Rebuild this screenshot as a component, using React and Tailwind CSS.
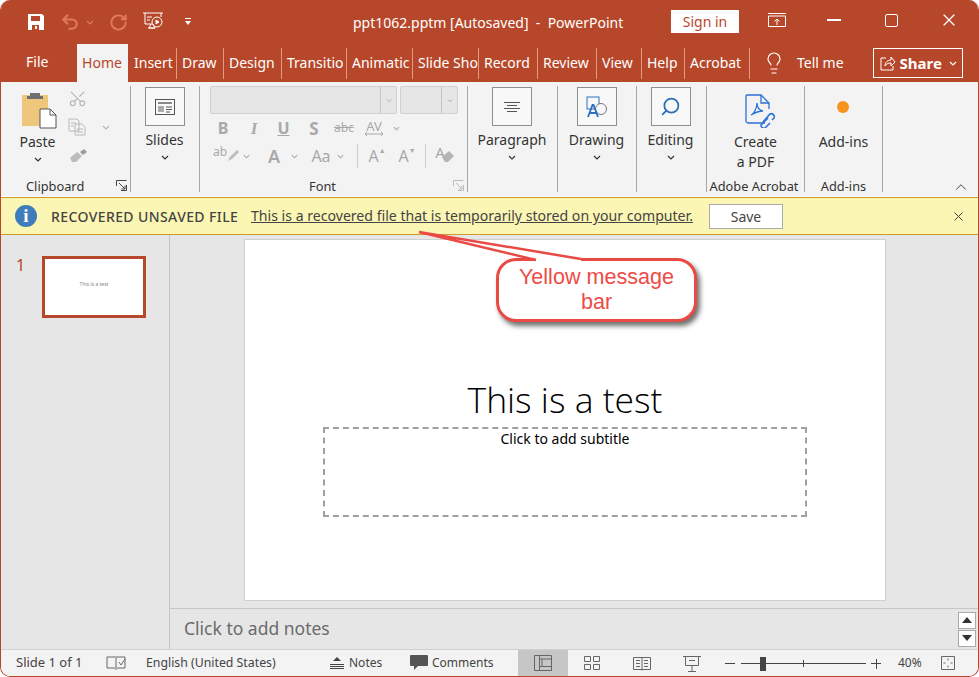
import React from 'react';
import { Undo2, RotateCw, Scissors, Lightbulb, Search, X, ChevronUp } from 'lucide-react';

const tabs = [
  ['Insert', 48],
  ['Draw', 47],
  ['Design', 58],
  ['Transitio', 65],
  ['Animatic', 66],
  ['Slide Sho', 66],
  ['Record', 59],
  ['Review', 59],
  ['View', 45],
  ['Help', 43],
  ['Acrobat', 65],
];

const Chevron = ({ className = '' }) => (
  <svg viewBox="0 0 8 5" className={`w-2 h-[5px] ${className}`} fill="none" stroke="currentColor" strokeWidth="1.2">
    <path d="M1 1l3 3 3-3" />
  </svg>
);

const Launcher = ({ className = '' }) => (
  <svg viewBox="0 0 11 11" className={`w-[11px] h-[11px] ${className}`} fill="none" stroke="currentColor">
    <path d="M.5 6V.5H10.5M10.5 5v5.5H5M3 3l6 6M9 5.5V9H5.5" />
  </svg>
);

const BigButton = ({ children, label }) => (
  <div className="flex flex-col items-center">
    <div className="w-10 h-[39px] border border-[#8f8f8f] bg-[#f8f8f8] flex items-center justify-center">{children}</div>
    <div className="mt-[4px] text-[14px] leading-[20px]">{label}</div>
    <Chevron className="mt-[5px] text-[#333]" />
  </div>
);

const Group = ({ width, label, children, launcher, labelClass = '' }) => (
  <div className="relative h-[106px] mt-[4px] border-r border-[#a6a6a6] shrink-0 flex flex-col" style={{ width }}>
    <div className="flex-1 min-h-0">{children}</div>
    {label && <div className={`text-center text-[12.8px] leading-[16px] h-[14px] text-[#333] whitespace-nowrap ${labelClass}`}>{label}</div>}
    {launcher}
  </div>
);

const FontCell = ({ w, children, className = '' }) => (
  <div className={`shrink-0 flex items-center justify-center ${className}`} style={{ width: w }}>{children}</div>
);

const Ribbon = () => (
  <div className="h-[114px] bg-[#f3f3f3] flex pl-[1px] text-[#333]">
    {/* Clipboard */}
    <Group
      width={129}
      label={<span className="block text-left pl-[24px]">Clipboard</span>}
      launcher={<Launcher className="absolute right-[3px] bottom-[1px] text-[#444]" />}
    >
      <div className="flex">
        <div className="w-[66px] flex flex-col items-center pl-[5px] pt-[5px]">
          <svg viewBox="0 0 36 38" className="w-9 h-[38px] ml-[3px]">
            <rect x="1" y="4" width="26" height="31" fill="#eec77c" />
            <path d="M9 5V2h10v3h3v3H6V5z" fill="#6f6f6f" />
            <path d="M19 18h10l6 6v13H19z" fill="#fff" stroke="#555" />
            <path d="M29 18v6h6" fill="none" stroke="#555" />
          </svg>
          <div className="text-[14px] leading-[20px] mt-[3px]">Paste</div>
          <Chevron className="mt-[5px]" />
        </div>
        <div className="flex flex-col text-[#b8b8b8] pt-[3px]">
          <Scissors className="w-[19px] h-[19px] rotate-[270deg]" strokeWidth={1.5} />
          <div className="flex items-center mt-[10px]">
            <svg viewBox="0 0 18 18" className="w-[18px] h-[18px]" fill="#f3f3f3" stroke="currentColor">
              <path d="M1 1h8l2 2v10H1zM7 6h7l3 3v8H7zM3 5h5M3 8h3M9 11h6M9 14h6" />
            </svg>
            <Chevron className="ml-[16px]" />
          </div>
          <svg viewBox="0 0 18 14" className="w-[18px] h-[14px] mt-[13px] ml-[1px]">
            <path d="M1 9l7-6 5 4-6 6H3z" fill="#bcbcbc" />
            <path d="M11 3l4-3 3 3-4 3z" fill="#9c9c9c" />
          </svg>
        </div>
      </div>
    </Group>

    {/* Slides */}
    <Group width={69}>
      <div className="flex justify-center pt-[1px] pr-[1px]">
        <BigButton label="Slides">
          <svg viewBox="0 0 20 16" className="w-5 h-4" fill="none" stroke="#555">
            <rect x=".5" y=".5" width="19" height="15" />
            <rect x="3" y="3" width="14" height="2" fill="#888" stroke="none" />
            <rect x="3" y="7" width="6" height="6" fill="#aaa" stroke="none" />
            <path d="M11 8h6M11 10.500h6M11 13h4" />
          </svg>
        </BigButton>
      </div>
    </Group>

    {/* Font */}
    <Group
      width={268}
      label="Font"
      labelClass="pr-[22px]"
      launcher={<Launcher className="absolute right-[3px] bottom-[1px] text-[#bdbdbd]" />}
    >
      <div className="pl-[10px] text-[#a9a9a9]">
        <div className="flex gap-[3px]">
          <div className="w-[187px] h-[28px] bg-[#e6e6e6] border border-[#d0d0d0] rounded-[2px] flex justify-end">
            <div className="w-4 border-l border-[#c4c4c4] flex items-center justify-center"><Chevron className="w-[6px]" /></div>
          </div>
          <div className="w-[58px] h-[28px] bg-[#e6e6e6] border border-[#d0d0d0] rounded-[2px] flex justify-end">
            <div className="w-4 border-l border-[#c4c4c4] flex items-center justify-center"><Chevron className="w-[6px]" /></div>
          </div>
        </div>
        <div className="flex items-center h-[24px] mt-[2px] text-[16px] leading-none">
          <FontCell w={26} className="font-bold">B</FontCell>
          <FontCell w={36} className="font-['Liberation_Serif',serif] font-bold italic text-[17px]">I</FontCell>
          <FontCell w={23} className="font-bold underline">U</FontCell>
          <FontCell w={38} className="font-bold text-[17px]">S</FontCell>
          <FontCell w={22} className="text-[12px] line-through">abc</FontCell>
          <FontCell w={38} className="flex-col text-[13px]">
            <span className="leading-[12px]">AV</span>
            <svg viewBox="0 0 18 4" className="w-[18px] h-1" fill="none" stroke="currentColor"><path d="M0 2h18M2 0L0 2l2 2M16 0l2 2-2 2" /></svg>
          </FontCell>
          <Chevron className="w-[7px]" />
        </div>
        <div className="flex items-center h-[24px] mt-[4px] leading-none">
          <FontCell w={32} className="relative text-[12px]">
            <span className="-mt-2">ab</span>
            <svg viewBox="0 0 12 14" className="w-3 h-[14px]"><path d="M1 12l2-4 7-7 2 2-7 7z" fill="#bcbcbc" /></svg>
          </FontCell>
          <Chevron className="w-[7px] ml-[1px]" />
          <FontCell w={48} className="text-[18px] font-semibold">A</FontCell>
          <Chevron className="w-[7px] -ml-[7px]" />
          <FontCell w={46} className="text-[16px]">Aa</FontCell>
          <Chevron className="w-[7px] -ml-[7px]" />
          <div className="h-[24px] border-l border-[#cfcfcf] ml-[13px]" />
          <FontCell w={38} className="text-[16px]">A<sup className="text-[7px] -mt-1">▲</sup></FontCell>
          <FontCell w={22} className="text-[16px]">A<sup className="text-[7px] -mt-1">▼</sup></FontCell>
          <div className="h-[24px] border-l border-[#cfcfcf] ml-[7px]" />
          <FontCell w={38} className="relative text-[15px]">
            <span className="-mt-2 -mr-1">A</span>
            <svg viewBox="0 0 14 12" className="w-[14px] h-3"><path d="M1 7l7-6 5 5-6 6H4z" fill="#b5b5b5" /></svg>
          </FontCell>
        </div>
      </div>
    </Group>

    {/* Paragraph */}
    <Group width={90}>
      <div className="flex justify-center pt-[1px] pr-[1px]">
        <BigButton label="Paragraph">
          <svg viewBox="0 0 16 10" className="w-4 h-[10px]" fill="none" stroke="#555">
            <path d="M0 .5h16M3 3.500h10M0 6.500h16M3 9.500h10" />
          </svg>
        </BigButton>
      </div>
    </Group>

    {/* Drawing */}
    <Group width={79}>
      <div className="flex justify-center pt-[1px] pr-[1px]">
        <BigButton label="Drawing">
          <svg viewBox="0 0 22 22" className="w-[22px] h-[22px]" fill="none">
            <rect x="1" y="1" width="12" height="12" stroke="#2b6fc2" />
            <circle cx="15" cy="13" r="5.500" stroke="#777" fill="#f8f8f8" />
            <path d="M2 21l4.500-12h1L12 21M3.500 17h7" stroke="#2b6fc2" strokeWidth="1.800" />
          </svg>
        </BigButton>
      </div>
    </Group>

    {/* Editing */}
    <Group width={70}>
      <div className="flex justify-center pt-[1px] pr-[2px]">
        <BigButton label="Editing">
          <Search className="w-[21px] h-[21px] -scale-x-100 text-[#2b6fb8]" strokeWidth={2} />
        </BigButton>
      </div>
    </Group>

    {/* Adobe Acrobat */}
    <Group width={98} label="Adobe Acrobat" labelClass="pr-[3px]">
      <div className="flex flex-col items-center pt-[8px]">
        <svg viewBox="0 0 32 34" className="w-8 h-[34px] ml-[10px]" fill="none" stroke="#2d72d9" strokeWidth="1.300">
          <path d="M20 29H3a2 2 0 01-2-2V2a1 1 0 011-1h14l8 8v6" />
          <path d="M16 1v8h8" />
          <path d="M6 21c3-1 6-7 6-12 0 4 2 7 6 8-3 0-7 1-12 4z" />
          <path d="M18 28l7-8a3 3 0 014 4l-2 2M23 24l-7 7a3 3 0 004 3l5-5" strokeWidth="1.600" />
        </svg>
        <div className="text-[14px] leading-[20px] text-center mt-[4px]">Create<br />a PDF</div>
      </div>
    </Group>

    {/* Add-ins */}
    <Group width={78} label="Add-ins">
      <div className="flex flex-col items-center pt-[15px]">
        <div className="w-3 h-3 rounded-full bg-[#f7941d] blur-[0.5px] -ml-[2px]" />
        <div className="text-[14px] leading-[20px] mt-[19px]">Add-ins</div>
      </div>
    </Group>

    <div className="flex-1 flex items-end justify-end pr-[8px]">
      <ChevronUp className="w-[18px] h-[18px] text-[#444]" strokeWidth={1.3} />
    </div>
  </div>
);

const StatusBar = () => (
  <div className="h-[27px] bg-[#f3f3f3] border-t border-[#d0d0d0] flex items-center text-[12px] text-[#444] pl-[15px] whitespace-nowrap">
    <span className="w-[90px] text-[13px]">Slide 1 of 1</span>
    <svg viewBox="0 0 20 16" className="w-5 h-4 text-[#666]" fill="none" stroke="currentColor">
      <path d="M9 2H1v11h8M11 2h8v11h-8M10 1v14M13 7l2 3 4-6" />
    </svg>
    <span className="ml-[20px] w-[184px] text-[12.3px]">English (United States)</span>
    <svg viewBox="0 0 14 14" className="w-[14px] h-[14px] text-[#444]" fill="none" stroke="currentColor">
      <path d="M0 8.500h14M0 10.500h14M0 12.500h14" />
      <path d="M7 1l4 4H3z" fill="currentColor" stroke="none" />
    </svg>
    <span className="ml-[5px] w-[61px]">Notes</span>
    <svg viewBox="0 0 18 16" className="w-[18px] h-4 text-[#555]" fill="currentColor">
      <path d="M1 0h16a1 1 0 011 1v9a1 1 0 01-1 1H8l-4 4v-4H1a1 1 0 01-1-1V1a1 1 0 011-1z" />
    </svg>
    <span className="ml-[4px] w-[86px]">Comments</span>
    <div className="w-[50px] h-full bg-[#c6c6c6] flex items-center justify-center">
      <svg viewBox="0 0 18 16" className="w-[18px] h-4 text-[#666]" fill="none" stroke="currentColor">
        <path d="M.5.500h17v15H.5zM5.500.500v15M5.500 4h12M5.500 11.500h12M8 4v7.500" />
      </svg>
    </div>
    <svg viewBox="0 0 16 14" className="w-4 h-[14px] ml-[16px] text-[#666]" fill="none" stroke="currentColor">
      <path d="M.5.500h6v5h-6zM9.500.500h6v5h-6zM.5 8.500h6v5h-6zM9.500 8.500h6v5h-6z" />
    </svg>
    <svg viewBox="0 0 18 15" className="w-[18px] h-[15px] ml-[33px] text-[#666]" fill="none" stroke="currentColor">
      <path d="M.5 1.500h17v12H.5zM9 1.500v13M3 4.500h4M3 7.500h4M3 10.500h4M11 4.500h4M11 7.500h4M11 10.500h4" />
    </svg>
    <svg viewBox="0 0 18 17" className="w-[18px] h-[17px] ml-[32px] text-[#666]" fill="none" stroke="currentColor">
      <path d="M0 1.500h18M2.500 1.500v9h13v-9M9 10.500V16M5 16.500h8M6 5.500h6" />
    </svg>
    <span className="w-[10px] border-t border-[#444] ml-[24px]" />
    <div className="relative w-[125px] ml-[6px] border-t border-[#444]">
      <span className="absolute left-[62px] -top-[4px] h-[7px] border-l border-[#444]" />
      <span className="absolute left-[19px] -top-[7px] w-[6px] h-[14px] bg-[#444]" />
    </div>
    <span className="relative w-[10px] border-t border-[#444] ml-[5px]">
      <span className="absolute left-[5px] -top-[5px] h-[10px] border-l border-[#444]" />
    </span>
    <span className="ml-[17px] w-[36px]">40%</span>
    <svg viewBox="0 0 14 14" className="w-[14px] h-[14px] ml-[7px] text-[#666]" fill="none" stroke="currentColor">
      <path d="M.5.500h13v13H.5zM7 2.500v2M7 9.500v2M2.500 7h2M9.500 7h2" />
    </svg>
  </div>
);

const Callout = () => (
  <div className="absolute left-[251px] top-[18px] w-[201px] h-[64px]">
    <div className="w-full h-full bg-white border-[3px] border-[#ea4a44] rounded-[20px] shadow-[3px_4px_5px_rgba(50,50,50,0.7)] text-[#ee4c46] text-[21.6px] leading-[25px] text-center font-['Liberation_Sans',sans-serif] pt-[3px] px-[8px]">
      Yellow message bar
    </div>
    <svg viewBox="0 0 170 32" className="absolute -left-[78px] -top-[27px] w-[170px] h-[32px] overflow-visible">
      <path d="M1 1L118 28V31H163V28C110 20 60 12 1 1Z" fill="#fff" stroke="none" />
      <path d="M118 29L1 1L163 28" fill="none" stroke="#ea4a44" strokeWidth="2.500" />
    </svg>
  </div>
);

const App = () => (
  <div className="w-[979px] h-[677px] overflow-hidden bg-white font-['Noto_Sans',sans-serif]">
    <div className="h-full rounded-[10px] overflow-hidden border-x border-b border-[#b7472a] flex flex-col">
      {/* Title bar */}
      <div className="h-[44px] shrink-0 bg-[#b7472a] flex items-center text-white text-[14px] whitespace-nowrap pl-[26px]">
        <svg viewBox="0 0 18 18" className="w-[18px] h-[18px]" fill="currentColor">
          <path fillRule="evenodd" d="M1 1h14l2 2v14H1zM4 3v5h9V3zM5 12v5h7v-5zM8 13h2v3H8z" />
        </svg>
        <Undo2 className="w-[20px] h-[20px] ml-[15px] text-[#e07a5c]" strokeWidth={2.5} />
        <Chevron className="ml-[6px] text-[#d9795f]" />
        <RotateCw className="w-[19px] h-[19px] ml-[15px] text-[#e07a5c]" strokeWidth={2.5} />
        <svg viewBox="0 0 20 20" className="w-5 h-5 ml-[15px]" fill="none" stroke="currentColor">
          <path d="M0 1h20M2 1v11h7M18 1v4M5 16h7M8 12l-2 4h6l-2-4M4 5h5M4 8h3" />
          <circle cx="14" cy="10" r="5" />
          <path d="M13 8l3 2-3 2z" fill="currentColor" />
        </svg>
        <svg viewBox="0 0 8 8" className="w-2 h-2 ml-[21px]" fill="currentColor">
          <path d="M1 0h6v1H1zM1 3h6L4 7z" />
        </svg>
        <span className="ml-[161px] w-[320px]">ppt1062.pptm [Autosaved]&nbsp; -&nbsp; PowerPoint</span>
        <div className="w-[68px] h-[23px] bg-white text-[#b7472a] text-center leading-[24px] -ml-[2px] -mt-[1px]">Sign in</div>
        <svg viewBox="0 0 18 14" className="w-[18px] h-[14px] ml-[29px] -mt-1" fill="none" stroke="currentColor">
          <path d="M.5 3h17v10.500H.5zM0 .500h18M9 12V6M6.500 8.500L9 6l2.500 2.500" />
        </svg>
        <span className="w-[14px] border-t-2 border-white ml-[41px] -mt-1" />
        <span className="w-[13px] h-[13px] border-[1.5px] border-white rounded-[2px] ml-[44px] -mt-1" />
        <X className="w-[20px] h-[20px] ml-[41px] -mt-1" strokeWidth={1.5} />
      </div>

      {/* Tabs */}
      <div className="h-[38px] shrink-0 bg-[#b7472a] flex text-white text-[14px] whitespace-nowrap">
        <div className="w-[76px] pl-[25px] pt-[8px] leading-[20px]">File</div>
        <div className="w-[51px] bg-[#f3f3f3] text-[#b7472a] text-center pt-[9px] pr-[1px] leading-[20px]">Home</div>
        <div className="flex pt-[4px] h-[35px] ml-[1px]">
          {tabs.map(([name, w]) => (
            <div key={name} className="border-r border-[#e39a82] pl-[5px] pt-[5px] leading-[20px] shrink-0" style={{ width: w }}>
              {name}
            </div>
          ))}
        </div>
        <Lightbulb className="w-[24px] h-[24px] ml-[12px] mt-[7px]" strokeWidth={1.2} />
        <span className="ml-[11px] pt-[9px] leading-[20px]">Tell me</span>
        <div className="ml-[29px] mt-[4px] w-[90px] h-[30px] border border-white flex items-center pl-[6px]">
          <svg viewBox="0 0 16 15" className="w-4 h-[15px]" fill="none" stroke="currentColor">
            <path d="M6 2H1v12h12v-4M5 10c0-4 3-6 6-6V1l4 5-4 4V7c-3 0-5 1-6 3z" />
          </svg>
          <span className="ml-[4px] font-bold text-[15px]">Share</span>
          <Chevron className="ml-[7px]" />
        </div>
      </div>

      <Ribbon />

      {/* Message bar */}
      <div className="h-[38px] shrink-0 bg-[#fcf6b4] border-y border-[#cf9a2a] flex items-center text-[14.1px] text-[#444] whitespace-nowrap pl-[14px] mt-[1px]">
        <div className="w-[22px] h-[22px] rounded-full bg-[#3f7cbb] text-white flex items-center justify-center font-bold text-[19px] font-['Liberation_Serif',serif]">i</div>
        <span className="ml-[14px] w-[200px] font-medium text-[14px] tracking-[0.4px]">RECOVERED UNSAVED FILE</span>
        <span className="underline w-[458px]">This is a recovered file that is temporarily stored on your computer.</span>
        <div className="w-[74px] h-[25px] bg-white border border-[#a9a9a9] text-center leading-[23px] text-[14px]">Save</div>
        <X className="w-[15px] h-[15px] ml-[168px] text-[#444]" strokeWidth={1.6} />
      </div>

      {/* Main area */}
      <div className="flex-1 min-h-0 flex bg-[#e6e6e6]">
        <div className="w-[169px] shrink-0 border-r border-[#c6c6c6] flex items-start pt-[21px] pl-[15px]">
          <span className="text-[#b7472a] text-[16px] leading-[18px] w-[26px]">1</span>
          <div className="w-[104px] h-[62px] bg-white border-[3px] border-[#b7472a] flex items-center justify-center">
            <span className="text-[5px] text-[#888] -mt-[5px]">This is a test</span>
          </div>
        </div>

        <div className="flex-1 min-w-0 flex flex-col">
          <div className="flex-1 min-h-0 pl-[74px] pt-[4px]">
            <div className="relative w-[642px] h-[362px] bg-white border border-[#d0d0d0] flex flex-col items-center">
              <div className="mt-[135px] h-[48px] text-[35.5px] leading-[48px] text-black font-['Open_Sans',sans-serif] font-light">This is a test</div>
              <div className="mt-[4px] w-[484px] h-[90px] border-2 border-dashed border-[#a0a0a0] text-center text-[14px] leading-[18px] pt-[1px] text-black">Click to add subtitle</div>
              <Callout />
            </div>
          </div>
          <div className="h-[41px] shrink-0 border-t border-[#c6c6c6] flex items-center justify-between pl-[14px] pr-[2px]">
            <span className="text-[17.5px] text-[#6b6b6b] -mt-[1px]">Click to add notes</span>
            <div className="flex flex-col gap-[1px]">
              <div className="w-[18px] h-[17px] bg-white border border-[#aaa] flex items-center justify-center">
                <svg viewBox="0 0 10 6" className="w-[10px] h-[6px]"><path d="M5 0l5 6H0z" fill="#333" /></svg>
              </div>
              <div className="w-[18px] h-[17px] bg-white border border-[#aaa] flex items-center justify-center">
                <svg viewBox="0 0 10 6" className="w-[10px] h-[6px]"><path d="M0 0h10L5 6z" fill="#333" /></svg>
              </div>
            </div>
          </div>
        </div>
      </div>

      <StatusBar />
    </div>
  </div>
);

export default App;
